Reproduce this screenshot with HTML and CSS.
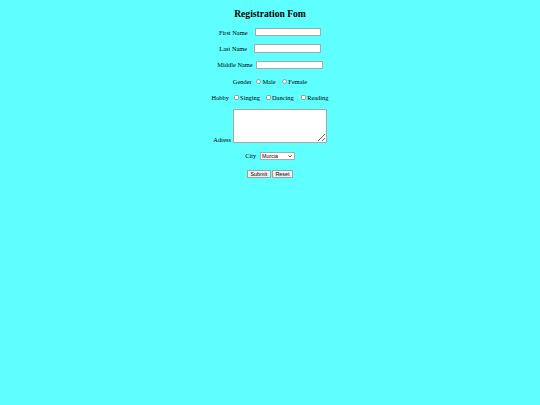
FILE: index.html
```html
<!DOCTYPE html>
<html>
<head>
<meta charset="utf-8">
<title>Registration Fom</title>
<link rel="stylesheet" href="styles.css">
</head>
<body>
<div class="page">
  <h2 class="title">Registration Fom</h2>
  <form class="form">
    <div class="row"><label class="lbl gap-wide">First Name</label><input type="text" class="field"></div>
    <div class="row"><label class="lbl gap-wide">Last Name</label><input type="text" class="field"></div>
    <div class="row"><label class="lbl gap-mid">Middle Name</label><input type="text" class="field"></div>
    <div class="row">
      <span class="lbl">Gender</span>
      <input type="radio" name="g" class="radio r1"><span>Male</span>
      <input type="radio" name="g" class="radio r2"><span>Female</span>
    </div>
    <div class="row">
      <span class="lbl">Hobby</span>
      <input type="checkbox" class="check c1"><span>Singing</span>
      <input type="checkbox" class="check c2"><span>Dancing</span>
      <input type="checkbox" class="check c3"><span>Reading</span>
    </div>
    <div class="row row-area"><span class="lbl area-lbl">Adress</span><textarea class="addr"></textarea></div>
    <div class="row row-city">
      <span class="lbl city-lbl">City</span>
      <span class="city-wrap">
        <select class="city"><option>Murcia</option><option>Madrid</option><option>Sevilla</option></select>
        <svg class="city-arrow" width="10" height="6" viewBox="0 0 10 6"><path d="M1 1 L5 5 L9 1" fill="none" stroke="#222" stroke-width="1.8"/></svg>
      </span>
    </div>
    <div class="row row-btn"><input type="submit" value="Submit" class="btn"><input type="reset" value="Reset" class="btn"></div>
  </form>
</div>
</body>
</html>
```

FILE: styles.css
```css
html {
  background: #60ffff;
}
body {
  margin: 0;
  background: #60ffff;
}
.page {
  zoom: 0.4;
  font-family: "Liberation Serif", "Times New Roman", serif;
  font-size: 16px;
  color: #000;
}
.title {
  font-size: 24px;
  font-weight: bold;
  text-align: center;
  margin: 20px 0 22px;
}
.form {
  display: flex;
  flex-direction: column;
  gap: 19px;
  margin: 0;
}
.row {
  display: flex;
  justify-content: center;
  align-items: center;
  height: 22px;
}
.gap-wide {
  margin-right: 18px;
}
.gap-mid {
  margin-right: 9px;
}
.field {
  width: 166px;
  height: 21px;
  box-sizing: border-box;
  border: 1px solid #a4a9a9;
  border-radius: 2px;
  background: #fff;
  margin: 0;
  padding: 1px 2px;
  font-family: "Liberation Sans", Arial, sans-serif;
  font-size: 13.33px;
}
.radio, .check {
  appearance: none;
  -webkit-appearance: none;
  width: 13px;
  height: 13px;
  box-sizing: border-box;
  border: 1.5px solid #9a9a9a;
  background: #fff;
  margin: 0 3px 0 0;
}
.radio {
  border-radius: 50%;
}
.check {
  border-radius: 3px;
}
.r1 { margin-left: 11px; }
.r2 { margin-left: 16px; }
.c1 { margin-left: 12px; }
.c2 { margin-left: 14px; }
.c3 { margin-left: 18px; }
.row-area {
  height: auto;
  align-items: flex-end;
  margin-top: -2px;
}
.area-lbl {
  margin-right: 4px;
}
.addr {
  width: 235px;
  height: 85px;
  box-sizing: border-box;
  border: 1px solid #a4a9a9;
  border-radius: 2px;
  background: #fff;
  margin: 0;
}
.row-city {
  margin-top: 2px;
}
.city-lbl {
  margin-right: 8px;
}
.city-wrap {
  position: relative;
  display: inline-block;
}
.city {
  appearance: none;
  -webkit-appearance: none;
  width: 88px;
  height: 19px;
  box-sizing: border-box;
  border: 1px solid #a4a9a9;
  border-radius: 2px;
  background: #fff;
  padding: 0 4px;
  margin: 0;
  font-family: "Liberation Sans", Arial, sans-serif;
  font-size: 13.33px;
  color: #000;
  display: block;
}
.city-arrow {
  position: absolute;
  right: 7px;
  top: 7px;
}
.row-btn {
  gap: 4px;
  margin-top: 4px;
}
.btn {
  font-family: "Liberation Sans", Arial, sans-serif;
  font-size: 13.33px;
  height: 21px;
  padding: 1px 6px;
  border: 1px solid #a0a0a0;
  border-radius: 2px;
  background: #efefef;
  color: #000;
  margin: 0;
}
```
